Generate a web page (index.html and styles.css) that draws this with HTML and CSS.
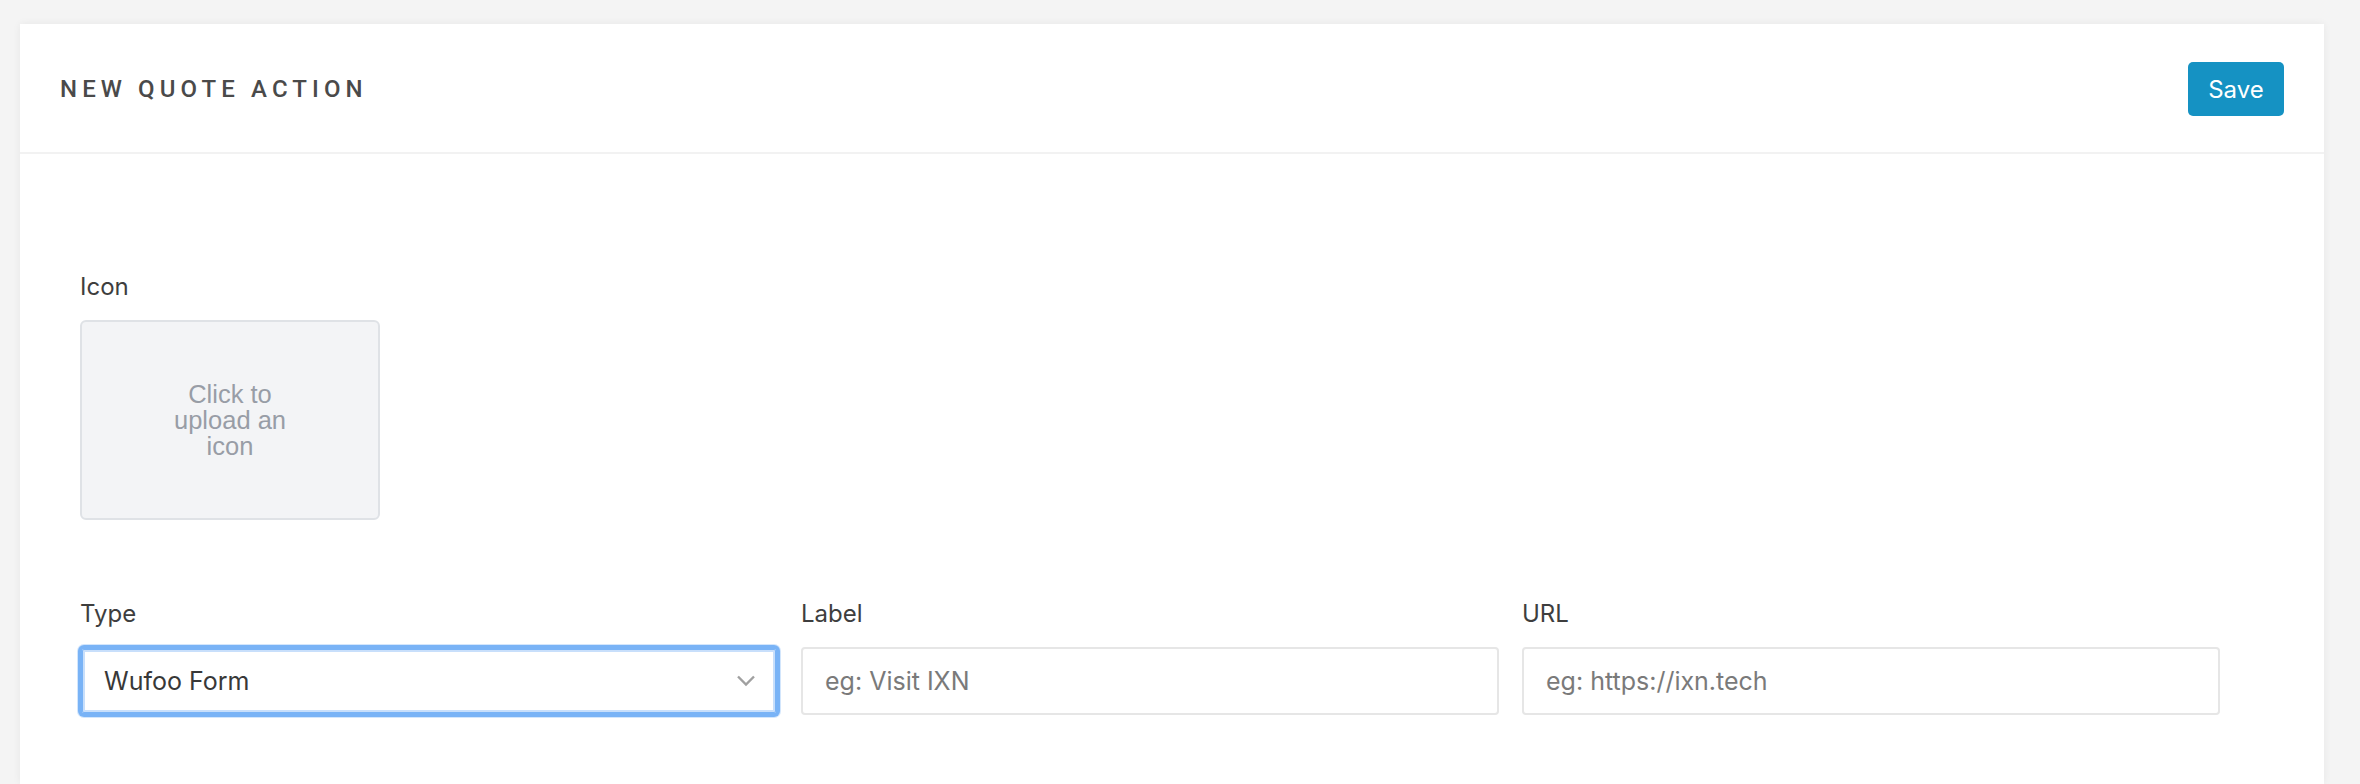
FILE: index.html
```html
<!DOCTYPE html>
<html lang="en">
<head>
<meta charset="utf-8">
<title>New Quote Action</title>
<link rel="stylesheet" href="styles.css">
</head>
<body>
<div class="card">
  <header class="card-header">
    <h1 class="title">NEW QUOTE ACTION</h1>
    <button class="btn-save" type="button">Save</button>
  </header>
  <div class="card-body">
    <div class="field">
      <div class="label">Icon</div>
      <div class="icon-upload"><span class="icon-upload-text">Click to upload an icon</span></div>
    </div>
    <div class="row">
      <div class="field">
        <div class="label">Type</div>
        <div class="select focused">
          <span class="select-value">Wufoo Form</span>
          <svg class="chevron" width="20" height="12" viewBox="0 0 20 12"><path d="M2 1.5 L10 9.5 L18 1.5" fill="none" stroke="#a0a0a0" stroke-width="2.4"/></svg>
        </div>
      </div>
      <div class="field">
        <div class="label">Label</div>
        <input class="input" type="text" placeholder="eg: Visit IXN">
      </div>
      <div class="field">
        <div class="label">URL</div>
        <input class="input" type="text" placeholder="eg: https://ixn.tech">
      </div>
    </div>
  </div>
</div>
</body>
</html>
```
FILE: styles.css
```css
html, body {
  margin: 0;
  padding: 0;
  background: #f4f4f4;
  height: 100%;
  overflow: hidden;
}
body {
  font-family: Inter, Roboto, "Liberation Sans", Arial, sans-serif;
  color: #3b3b3b;
}
.card {
  margin: 24px 36px 0 20px;
  height: 760px;
  background: #fff;
  box-shadow: 0 0 8px rgba(0, 0, 0, 0.06);
}
.card-header {
  height: 130px;
  box-sizing: border-box;
  padding: 2px 40px 0 40px;
  display: flex;
  align-items: center;
  justify-content: space-between;
  border-bottom: 2px solid #f2f2f2;
}
.title {
  margin: 0;
  font-family: Roboto, "Liberation Sans", sans-serif;
  font-size: 24px;
  font-weight: 500;
  letter-spacing: 5.1px;
  color: #4a4a4a;
}
.btn-save {
  width: 96px;
  height: 54px;
  border: 0;
  border-radius: 5px;
  background: #1592c3;
  color: #fff;
  font-family: Inter, Roboto, sans-serif;
  font-size: 24px;
  padding: 0;
}
.card-body {
  padding: 115px 60px 0 60px;
}
.label {
  font-size: 24px;
  line-height: 36px;
  color: #3e3e3e;
  margin-bottom: 15px;
}
.icon-upload {
  width: 300px;
  height: 200px;
  box-sizing: border-box;
  background: #f3f4f6;
  border: 2px solid #dfe2e6;
  border-radius: 6px;
  display: flex;
  align-items: center;
  justify-content: center;
}
.icon-upload-text {
  width: 130px;
  text-align: center;
  font-family: "Liberation Sans", Arial, sans-serif;
  font-size: 25.5px;
  line-height: 26px;
  color: #989da6;
}
.row {
  margin-top: 76px;
  display: grid;
  grid-template-columns: repeat(3, 698px);
  column-gap: 23px;
}
.input, .select {
  width: 100%;
  height: 68px;
  box-sizing: border-box;
  border: 2px solid #e6e6e6;
  border-radius: 4px;
  padding: 0 22px;
  font-family: Inter, Roboto, sans-serif;
  font-size: 25px;
  color: #333;
  background: #fff;
  margin: 0;
}
.input::placeholder {
  color: #7a7a7a;
}
.select {
  display: flex;
  align-items: center;
  justify-content: space-between;
}
.select.focused {
  border-color: #79b3f6;
  box-shadow: 0 0 0 2px #79b3f6, 0 0 0 3px #d3e6fc, inset 0 0 0 1px #79b3f6, inset 0 0 0 3px #c8dffb;
}
.select-value {
  color: #383838;
}
.chevron {
  margin-right: -2px;
}
```
